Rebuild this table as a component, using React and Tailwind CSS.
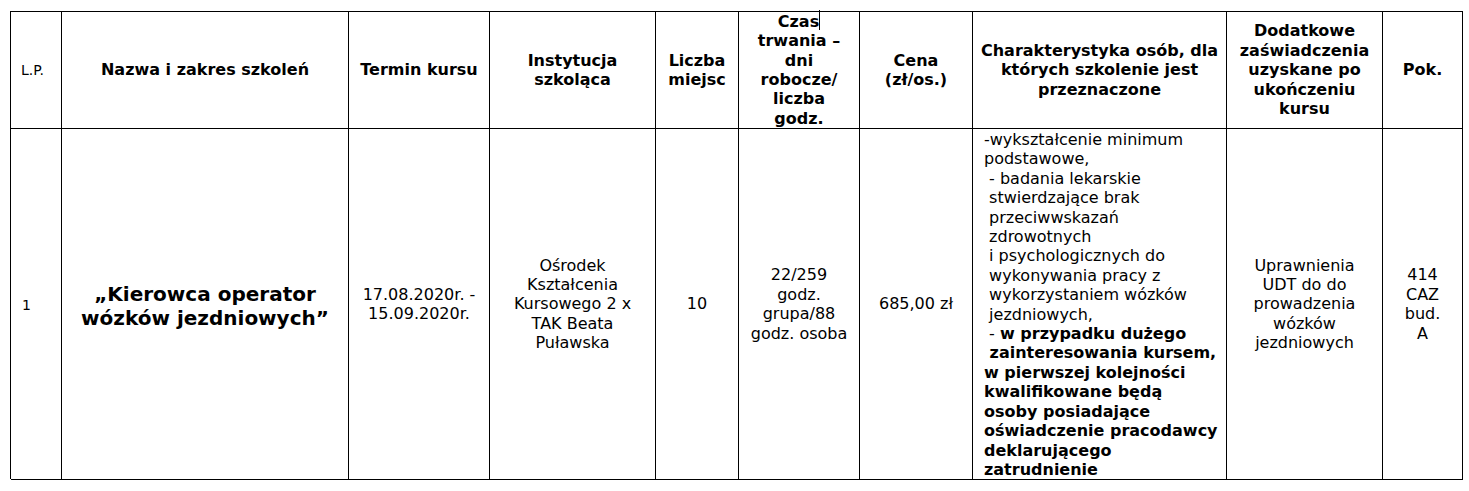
import React from 'react';

const cols = 'grid grid-cols-[51px_287px_141px_166px_83px_121px_113px_254px_156px_80px]';

const HeadCell = ({ children, className = '' }) => (
  <div className={`border-r border-b border-black h-[117px] flex items-center justify-center text-center font-bold text-[16px] leading-[19.4px] ${className}`}>
    <div>{children}</div>
  </div>
);

const BodyCell = ({ children, className = '' }) => (
  <div className={`border-r border-b border-black flex items-center justify-center text-center text-[16px] leading-[19.4px] ${className}`}>
    <div>{children}</div>
  </div>
);

export default function App() {
  return (
    <div className="bg-white w-[1469px] h-[491px] pt-[11px] pl-[10px] text-black font-['DejaVu_Sans',Verdana,sans-serif]">
      <div className="w-[1453px] border-l border-t border-black">
        {/* naglowek */}
        <div className={cols}>
          <div className="border-r border-b border-black h-[117px] flex items-center pl-[10px] text-[14px]">L.P.</div>
          <HeadCell>Nazwa i zakres szkoleń</HeadCell>
          <HeadCell>Termin kursu</HeadCell>
          <HeadCell>Instytucja<br />szkoląca</HeadCell>
          <HeadCell>Liczba<br />miejsc</HeadCell>
          <HeadCell>
            Czas<span className="inline-block w-px h-[20px] bg-black align-middle -mt-[4px]" /><br />trwania –<br />dni<br />robocze/<br />liczba<br />godz.
          </HeadCell>
          <HeadCell>Cena<br />(zł/os.)</HeadCell>
          <HeadCell>Charakterystyka osób, dla<br />których szkolenie jest<br />przeznaczone</HeadCell>
          <HeadCell>Dodatkowe<br />zaświadczenia<br />uzyskane po<br />ukończeniu<br />kursu</HeadCell>
          <HeadCell>Pok.</HeadCell>
        </div>

        {/* wiersz 1 */}
        <div className={`${cols} h-[350px]`}>
          <div className="border-r border-b border-black flex items-center pl-[11px] text-[14px] pt-[2px]">1</div>
          <BodyCell className="font-bold text-[20px] leading-[24.3px] pt-[4px]">
            „Kierowca operator<br />wózków jezdniowych”
          </BodyCell>
          <BodyCell>17.08.2020r. -<br />15.09.2020r.</BodyCell>
          <BodyCell>Ośrodek<br />Kształcenia<br />Kursowego 2 x<br />TAK Beata<br />Puławska</BodyCell>
          <BodyCell>10</BodyCell>
          <BodyCell>22/259<br />godz.<br />grupa/88<br />godz. osoba</BodyCell>
          <BodyCell>685,00 zł</BodyCell>
          <div className="border-r border-b border-black pl-[11px] pt-px text-[16px] leading-[19.4px] whitespace-pre">
            <div>-wykształcenie minimum</div>
            <div>podstawowe,</div>
            <div> - badania lekarskie</div>
            <div> stwierdzające brak</div>
            <div> przeciwwskazań</div>
            <div> zdrowotnych</div>
            <div> i psychologicznych do</div>
            <div> wykonywania pracy z</div>
            <div> wykorzystaniem wózków</div>
            <div> jezdniowych,</div>
            <div> - <span className="font-bold">w przypadku dużego</span></div>
            <div className="font-bold"> zainteresowania kursem,</div>
            <div className="font-bold">w pierwszej kolejności</div>
            <div className="font-bold">kwalifikowane będą</div>
            <div className="font-bold">osoby posiadające</div>
            <div className="font-bold">oświadczenie pracodawcy</div>
            <div className="font-bold">deklarującego</div>
            <div className="font-bold">zatrudnienie</div>
          </div>
          <BodyCell>Uprawnienia<br />UDT do do<br />prowadzenia<br />wózków<br />jezdniowych</BodyCell>
          <BodyCell>414<br />CAZ<br />bud.<br />A</BodyCell>
        </div>
      </div>
    </div>
  );
}
